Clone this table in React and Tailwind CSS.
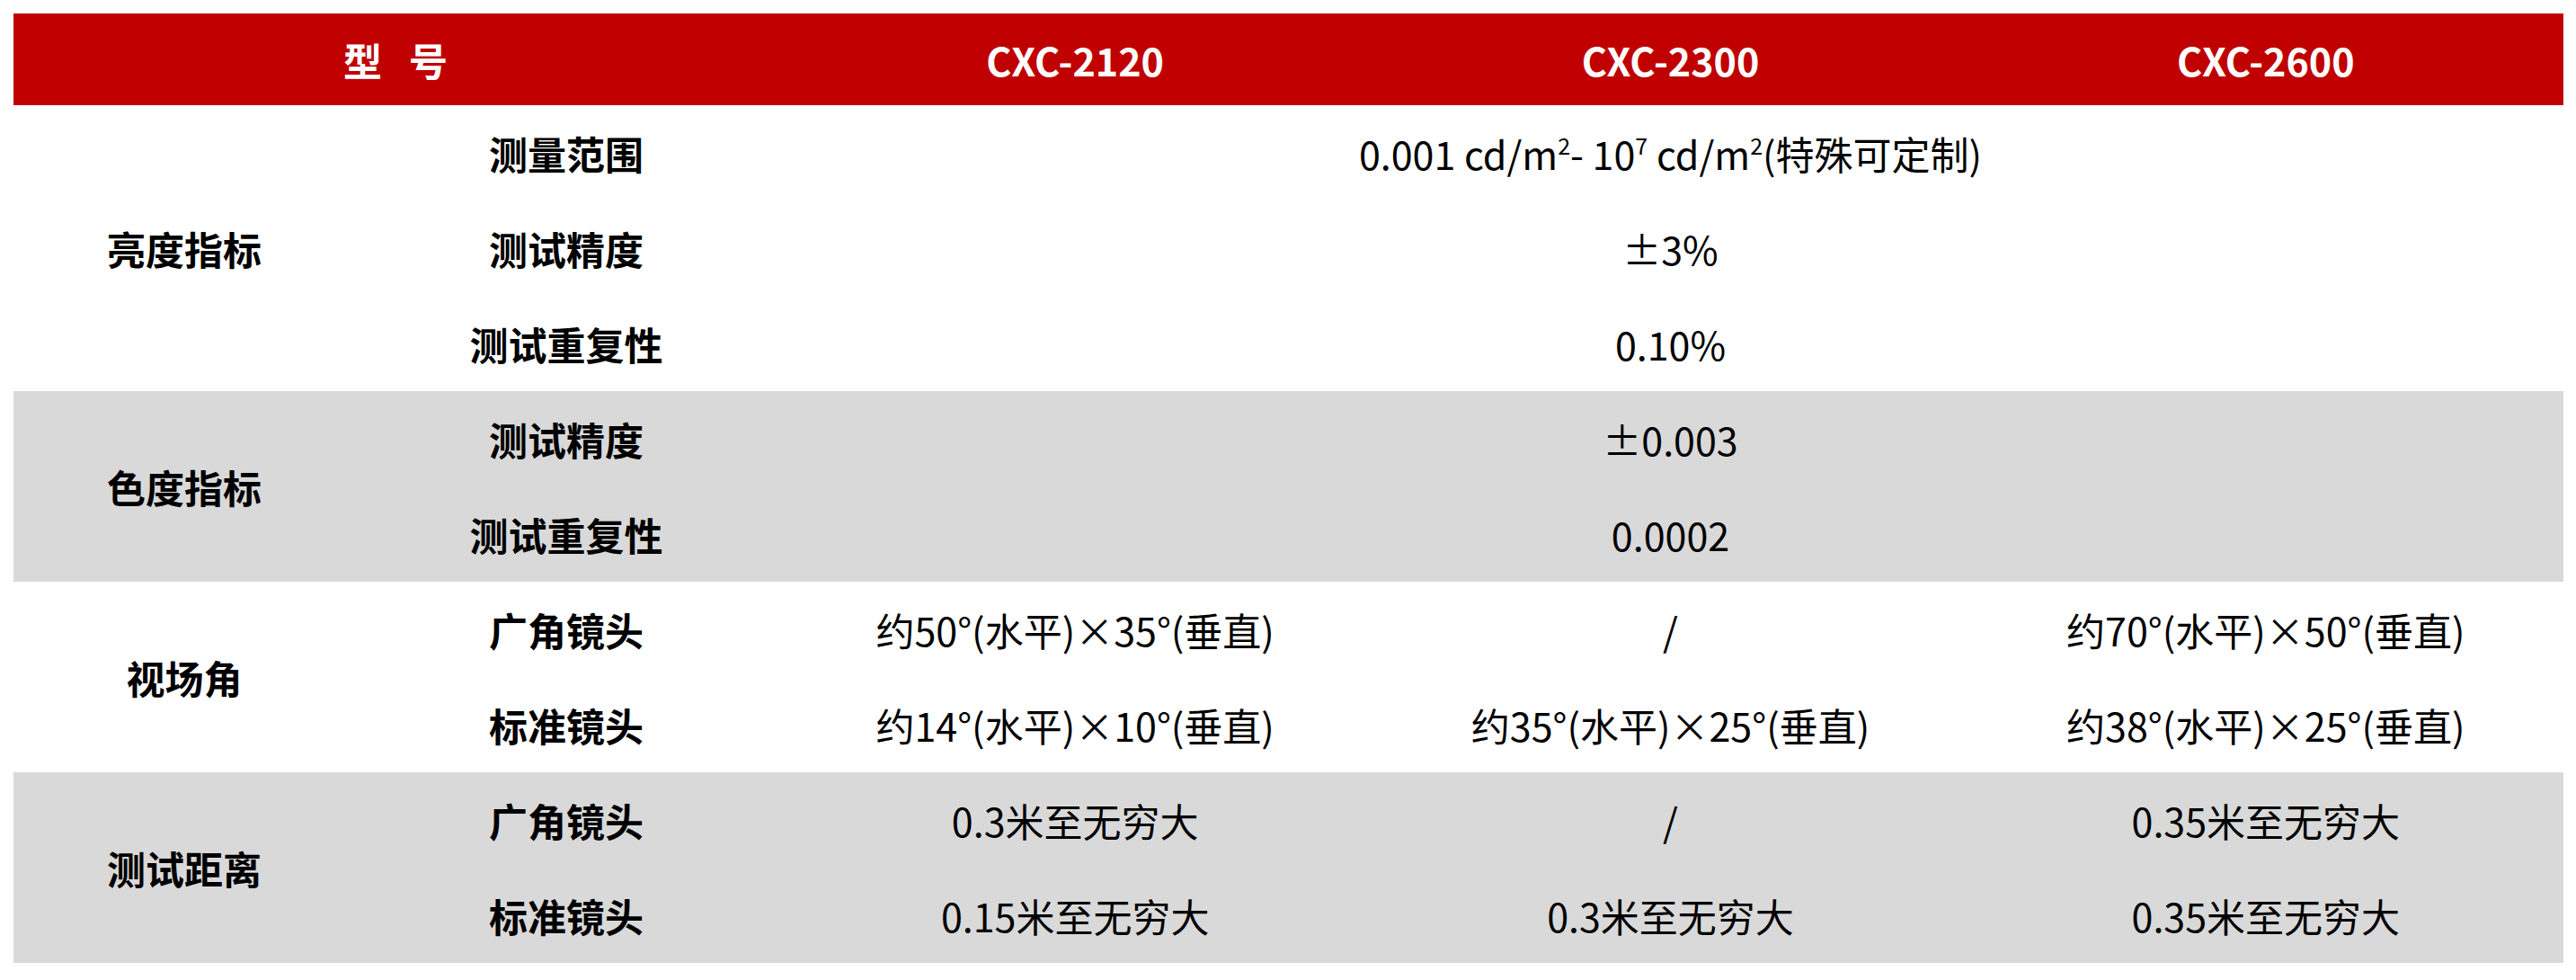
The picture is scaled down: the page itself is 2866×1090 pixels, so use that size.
import React from "react";

const font = { fontFamily: '"Noto Sans CJK SC", "Noto Sans", sans-serif' };

const Sup = ({ children }) => (
  <sup className="text-[25px] relative -top-[17px]">{children}</sup>
);

const sections = [
  {
    name: "亮度指标",
    gray: false,
    rows: [
      {
        label: "测量范围",
        merged: (
          <span>
            0.001 cd/m<Sup>2</Sup>- 10<Sup>7</Sup> cd/m<Sup>2</Sup>(特殊可定制)
          </span>
        ),
      },
      { label: "测试精度", merged: "±3%" },
      { label: "测试重复性", merged: "0.10%" },
    ],
  },
  {
    name: "色度指标",
    gray: true,
    rows: [
      { label: "测试精度", merged: "±0.003" },
      { label: "测试重复性", merged: "0.0002" },
    ],
  },
  {
    name: "视场角",
    gray: false,
    rows: [
      { label: "广角镜头", values: ["约50°(水平)×35°(垂直)", "/", "约70°(水平)×50°(垂直)"] },
      { label: "标准镜头", values: ["约14°(水平)×10°(垂直)", "约35°(水平)×25°(垂直)", "约38°(水平)×25°(垂直)"] },
    ],
  },
  {
    name: "测试距离",
    gray: true,
    rows: [
      { label: "广角镜头", values: ["0.3米至无穷大", "/", "0.35米至无穷大"] },
      { label: "标准镜头", values: ["0.15米至无穷大", "0.3米至无穷大", "0.35米至无穷大"] },
    ],
  },
];

const cols = "grid grid-cols-[380px_470px_1fr_1fr_1fr]";

const Section = ({ section }) => {
  const n = section.rows.length;
  return (
    <div
      className={`${cols} ${n === 3 ? "grid-rows-[repeat(3,106px)]" : "grid-rows-[repeat(2,106px)]"} ${
        section.gray ? "bg-[#d9d9d9]" : "bg-white"
      }`}
    >
      <div
        className={`${n === 3 ? "row-span-3" : "row-span-2"} col-start-1 flex items-center justify-center font-bold`}
      >
        {section.name}
      </div>
      {section.rows.map((row, i) => (
        <React.Fragment key={i}>
          <div className="col-start-2 flex items-center justify-center font-bold">{row.label}</div>
          {row.merged ? (
            <div className="col-span-3 flex items-center justify-center">{row.merged}</div>
          ) : (
            row.values.map((v, j) => (
              <div key={j} className="flex items-center justify-center">
                {v}
              </div>
            ))
          )}
        </React.Fragment>
      ))}
    </div>
  );
};

export default function App() {
  return (
    <div className="min-h-screen bg-white pt-[15px] pl-[15px] pr-[14px] text-[43px] text-black" style={font}>
      <div className={`${cols} h-[102px] bg-[#c00000] text-white font-bold`}>
        <div className="col-span-2 flex items-center justify-center gap-[30px]">
          <span>型</span>
          <span>号</span>
        </div>
        <div className="flex items-center justify-center">CXC-2120</div>
        <div className="flex items-center justify-center">CXC-2300</div>
        <div className="flex items-center justify-center">CXC-2600</div>
      </div>
      {sections.map((s, i) => (
        <Section key={i} section={s} />
      ))}
    </div>
  );
}
